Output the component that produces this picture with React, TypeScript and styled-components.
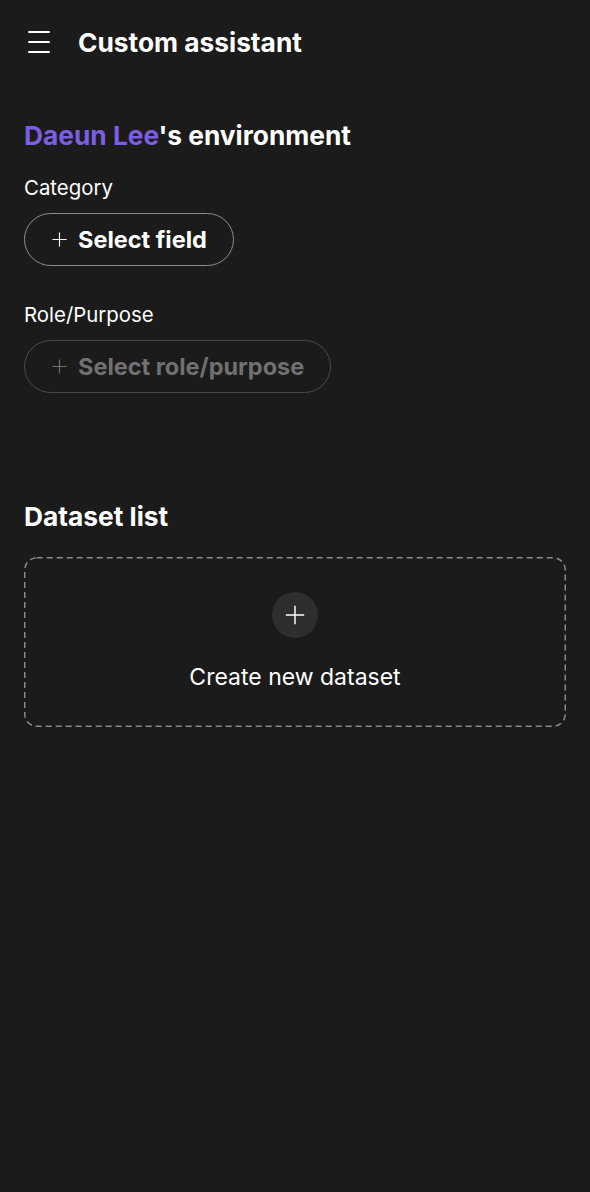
import React from "react";
import styled, { createGlobalStyle } from "styled-components";

const GlobalStyle = createGlobalStyle`
  html, body {
    margin: 0;
    padding: 0;
    background: #1b1b1b;
  }
  body {
    font-family: Inter, "Noto Sans", "Liberation Sans", sans-serif;
    color: #ffffff;
    -webkit-font-smoothing: antialiased;
  }
  * { box-sizing: border-box; }
`;

const Page = styled.div`
  min-height: 1192px;
  background: #1b1b1b;
  display: flex;
  flex-direction: column;
`;

const Header = styled.header`
  height: 84px;
  display: flex;
  align-items: center;
  gap: 28px;
  padding: 0 28px;
`;

const MenuButton = styled.button`
  width: 22px;
  height: 22px;
  padding: 0;
  border: none;
  background: transparent;
  display: flex;
  flex-direction: column;
  justify-content: space-between;
  cursor: pointer;
`;

const MenuLine = styled.span`
  display: block;
  height: 2px;
  width: 100%;
  background: #ffffff;
  border-radius: 1px;
`;

const Title = styled.h1`
  margin: 0;
  font-size: 26.3px;
  font-weight: 700;
  color: #ffffff;
`;

const Content = styled.main`
  display: flex;
  flex-direction: column;
  padding: 36px 24px 0;
`;

const SectionTitle = styled.h2<{ $gapAfter: number }>`
  margin: 0 0 ${(p) => p.$gapAfter}px;
  font-size: 26.3px;
  line-height: 32px;
  font-weight: 700;
  color: #ffffff;
`;

const Highlight = styled.span`
  color: #7b5fe0;
`;

const FieldLabel = styled.div`
  font-size: 20.4px;
  line-height: 24px;
  font-weight: 400;
  color: #ffffff;
  margin-bottom: 13px;
`;

const Field = styled.div<{ $gapAfter: number }>`
  display: flex;
  flex-direction: column;
  align-items: flex-start;
  margin-bottom: ${(p) => p.$gapAfter}px;
`;

const PillButton = styled.button<{ $disabled?: boolean }>`
  height: 53px;
  display: inline-flex;
  align-items: center;
  gap: 10px;
  padding: 0 26px 0 26px;
  border-radius: 27px;
  background: transparent;
  border: 1.5px solid ${(p) => (p.$disabled ? "#4a4a4a" : "#8c8c8c")};
  color: ${(p) => (p.$disabled ? "#707070" : "#ffffff")};
  font-family: inherit;
  font-size: 23.5px;
  font-weight: 700;
  cursor: ${(p) => (p.$disabled ? "default" : "pointer")};
`;

const dashSvg = encodeURIComponent(
  "<svg xmlns='http://www.w3.org/2000/svg' width='100%' height='100%'><rect x='0.75' y='0.75' width='calc(100% - 1.5px)' height='calc(100% - 1.5px)' rx='12' ry='12' fill='none' stroke='#8a8a8a' stroke-width='1.5' stroke-dasharray='6 4'/></svg>"
);

const DropZone = styled.button`
  width: 100%;
  height: 170px;
  border: none;
  border-radius: 12px;
  background-color: transparent;
  background-image: url("data:image/svg+xml,${dashSvg}");
  background-repeat: no-repeat;
  display: flex;
  flex-direction: column;
  align-items: center;
  padding: 35px 0 0;
  gap: 25px;
  color: #ffffff;
  font-family: inherit;
  cursor: pointer;
`;

const AddCircle = styled.span`
  width: 46px;
  height: 46px;
  border-radius: 50%;
  background: #2e2e2e;
  display: flex;
  align-items: center;
  justify-content: center;
`;

const DropLabel = styled.span`
  font-size: 23px;
  line-height: 28px;
  font-weight: 400;
  color: #ffffff;
`;

const PlusIcon = ({ size, color, stroke }: { size: number; color: string; stroke: number }) => (
  <svg width={size} height={size} viewBox="0 0 24 24" fill="none">
    <path d="M12 2V22M2 12H22" stroke={color} strokeWidth={stroke} strokeLinecap="butt" />
  </svg>
);

export default function App() {
  return (
    <>
      <GlobalStyle />
      <Page>
        <Header>
          <MenuButton aria-label="menu">
            <MenuLine />
            <MenuLine />
            <MenuLine />
          </MenuButton>
          <Title>Custom assistant</Title>
        </Header>
        <Content>
          <SectionTitle $gapAfter={24}>
            <Highlight>Daeun Lee</Highlight>'s environment
          </SectionTitle>
          <Field $gapAfter={37}>
            <FieldLabel>Category</FieldLabel>
            <PillButton>
              <PlusIcon size={17} color="#ffffff" stroke={1.6} />
              Select field
            </PillButton>
          </Field>
          <Field $gapAfter={108}>
            <FieldLabel>Role/Purpose</FieldLabel>
            <PillButton $disabled>
              <PlusIcon size={17} color="#707070" stroke={1.6} />
              Select role/purpose
            </PillButton>
          </Field>
          <SectionTitle $gapAfter={24}>Dataset list</SectionTitle>
          <DropZone>
            <AddCircle>
              <PlusIcon size={22} color="#ffffff" stroke={1.6} />
            </AddCircle>
            <DropLabel>Create new dataset</DropLabel>
          </DropZone>
        </Content>
      </Page>
    </>
  );
}
